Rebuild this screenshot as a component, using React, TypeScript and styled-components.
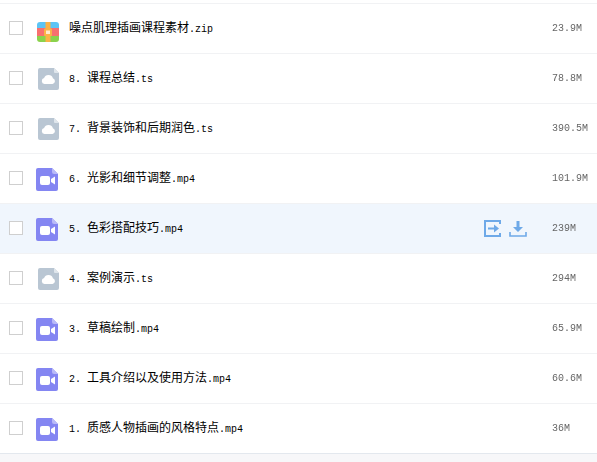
import React from 'react';
import styled, { createGlobalStyle } from 'styled-components';

type FileKind = 'zip' | 'cloud' | 'video';

interface IFileItem {
	name: string;
	size: string;
	kind: FileKind;
	active?: boolean;
}

const files: IFileItem[] = [
	{ name: '噪点肌理插画课程素材.zip', size: '23.9M', kind: 'zip' },
	{ name: '8. 课程总结.ts', size: '78.8M', kind: 'cloud' },
	{ name: '7. 背景装饰和后期润色.ts', size: '390.5M', kind: 'cloud' },
	{ name: '6. 光影和细节调整.mp4', size: '101.9M', kind: 'video' },
	{ name: '5. 色彩搭配技巧.mp4', size: '239M', kind: 'video', active: true },
	{ name: '4. 案例演示.ts', size: '294M', kind: 'cloud' },
	{ name: '3. 草稿绘制.mp4', size: '65.9M', kind: 'video' },
	{ name: '2. 工具介绍以及使用方法.mp4', size: '60.6M', kind: 'video' },
	{ name: '1. 质感人物插画的风格特点.mp4', size: '36M', kind: 'video' },
];

const ZipIcon = () => (
	<svg width='22' height='20' viewBox='0 0 22 20'>
		<path d='M3 0h16a3 3 0 0 1 3 3v3H0V3a3 3 0 0 1 3-3z' fill='#5cc4f5' />
		<rect x='0' y='6' width='22' height='8' fill='#f8706f' />
		<path d='M0 14h22v3a3 3 0 0 1-3 3H3a3 3 0 0 1-3-3z' fill='#8bd24c' />
		<rect x='8.5' y='0' width='5' height='20' fill='#fbb347' />
		<rect x='7' y='6.5' width='8' height='7.5' rx='1' fill='#fbb347' />
		<rect x='9' y='8.5' width='4' height='3.5' fill='#ffeccf' />
	</svg>
);

const CloudIcon = () => (
	<svg width='21' height='22' viewBox='0 0 21 22'>
		<path d='M2 0h14l5 5v15a2 2 0 0 1-2 2H2a2 2 0 0 1-2-2V2a2 2 0 0 1 2-2z' fill='#b9c6d3' />
		<path d='M16 0l5 5h-4a1 1 0 0 1-1-1z' fill='#dfe6ec' />
		<path
			d='M6.5 16a3 3 0 0 1-.4-5.9 4.6 4.6 0 0 1 8.8.1 3 3 0 0 1-.4 5.8z'
			fill='#fff'
		/>
	</svg>
);

const VideoIcon = () => (
	<svg width='22' height='23' viewBox='0 0 22 23'>
		<path d='M2 0h14l6 6v15a2 2 0 0 1-2 2H2a2 2 0 0 1-2-2V2a2 2 0 0 1 2-2z' fill='#8486f2' />
		<path d='M16 0l6 6h-4a2 2 0 0 1-2-2z' fill='#b9baf8' />
		<rect x='4' y='8' width='10' height='9' rx='2' fill='#fff' />
		<path d='M15 11l4-2.5v8L15 14z' fill='#fff' />
	</svg>
);

const ShareIcon = () => (
	<svg width='17' height='17' viewBox='0 0 17 17'>
		<path d='M16 4V1H1v15h15v-3' fill='none' stroke='#6ea9e8' strokeWidth='2' />
		<path d='M4 7.5h6V4.5l5 4-5 4V9.5H4z' fill='#6ea9e8' />
	</svg>
);

const DownloadIcon = () => (
	<svg width='18' height='16' viewBox='0 0 18 16'>
		<path d='M7.5 0h3v6H14l-5 5-5-5h3.5z' fill='#6ea9e8' />
		<path d='M1 11v4h16v-4' fill='none' stroke='#6ea9e8' strokeWidth='1.6' />
	</svg>
);

const icons: Record<FileKind, React.FC> = {
	zip: ZipIcon,
	cloud: CloudIcon,
	video: VideoIcon,
};

// latin runs are set smaller so they take half the width of a CJK glyph
const FileName: React.FC<{ name: string }> = ({ name }) => (
	<Name>
		{name.split(/([\x20-\x7e]+)/).map((part, i) =>
			/^[\x20-\x7e]+$/.test(part) ? <Latin key={i}>{part}</Latin> : part,
		)}
	</Name>
);

const App: React.FC = () => (
	<>
		<GlobalStyle />
		<List>
			{files.map((file) => {
				const Icon = icons[file.kind];
				return (
					<Row key={file.name} $active={file.active}>
						<Checkbox />
						<IconCell $kind={file.kind}>
							<Icon />
						</IconCell>
						<FileName name={file.name} />
						{file.active && (
							<Actions>
								<ShareIcon />
								<DownloadIcon />
							</Actions>
						)}
						<Size>{file.size}</Size>
					</Row>
				);
			})}
		</List>
		<Footer />
	</>
);

const GlobalStyle = createGlobalStyle`
	html, body {
		margin: 0;
		padding: 0;
		height: 462px;
		overflow: hidden;
		background: #fff;
	}
`;

const List = styled.div`
	padding-top: 3px;
	border-bottom: 1px solid #e3e8ee;
`;

const Row = styled.div<{ $active?: boolean }>`
	height: 50px;
	box-sizing: border-box;
	display: flex;
	align-items: center;
	padding-left: 9px;
	border-top: 1px solid #f1f2f4;
	background: ${(p) => (p.$active ? '#f0f6fd' : '#fff')};
`;

const Checkbox = styled.span`
	width: 14px;
	height: 14px;
	box-sizing: border-box;
	border: 1px solid #cfcfcf;
	background: #fff;
	flex: none;
	margin-bottom: 2px;
`;

const iconLeft: Record<FileKind, number> = { zip: 14, cloud: 15, video: 13 };
const iconTop: Record<FileKind, number> = { zip: 7, cloud: 0, video: 1 };

const IconCell = styled.span<{ $kind: FileKind }>`
	width: 46px;
	flex: none;
	padding-left: ${(p) => iconLeft[p.$kind]}px;
	padding-top: ${(p) => iconTop[p.$kind]}px;
	box-sizing: border-box;
	display: flex;
	align-items: center;

	& svg {
		display: block;
	}
`;

const Name = styled.span`
	font-family: 'Noto Sans CJK SC', sans-serif;
	font-size: 12px;
	line-height: 16px;
	color: #000;
	white-space: pre;
	flex: 1;
`;

const Latin = styled.span`
	font-family: 'Liberation Mono', monospace;
	font-size: 10px;
`;

const Actions = styled.span`
	display: flex;
	align-items: center;
	gap: 8px;
	margin-right: 25px;
`;

const Size = styled.span`
	width: 45px;
	flex: none;
	font-family: 'Liberation Mono', monospace;
	font-size: 10px;
	line-height: 16px;
	color: #666;
	will-change: opacity;
`;

const Footer = styled.div`
	height: 8px;
	background: #f7f7f9;
`;

export default App;
